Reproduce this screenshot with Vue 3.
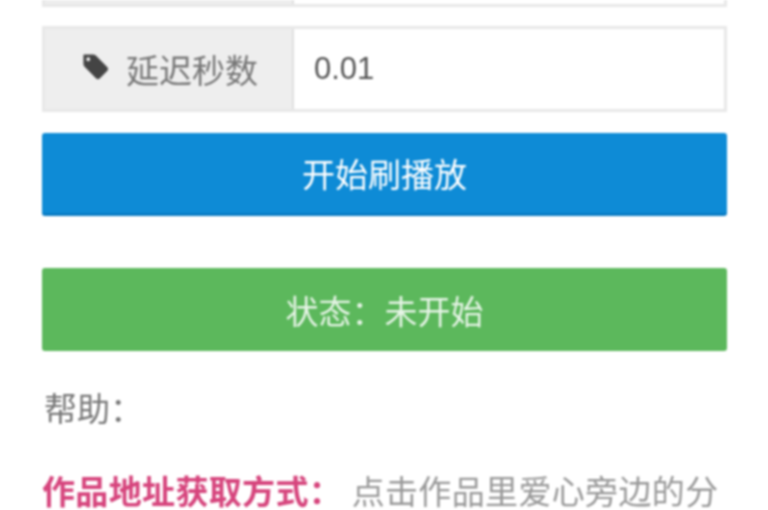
<script setup>
const delay = "0.01"
</script>

<template>
    <div class="page">
        <div class="input_group first_group">
            <div class="addon"></div>
            <div class="value"></div>
        </div>
        <div class="input_group">
            <div class="addon">
                <svg class="tag_icon" viewBox="0 0 30 30">
                    <path d="M3 2.500h9.500q1.600 0 2.800 1.200l12 12q1.700 1.800 0 3.600l-8 8q-1.800 1.700-3.600 0l-12-12q-1.200-1.200-1.200-2.800V3q0-.5.5-.5zM7.500 5.500a2 2 0 1 0 0 4 2 2 0 0 0 0-4z" fill-rule="evenodd" />
                </svg>
                <span>延迟秒数</span>
            </div>
            <div class="value">{{ delay }}</div>
        </div>
        <div class="btn btn_start">开始刷播放</div>
        <div class="btn btn_status">状态：未开始</div>
        <p class="help_title">帮助：</p>
        <p class="help_text"><span class="pink">作品地址获取方式：</span> 点击作品里爱心旁边的分</p>
    </div>
</template>

<style scoped>
.page {
    width: 768px;
    height: 510px;
    overflow: hidden;
    box-sizing: border-box;
    padding: 0 41px 0 42px;
    background-color: #fff;
    color: #777;
    font-family: "Liberation Sans", "Noto Sans CJK SC", sans-serif;
    font-size: 33px;
    filter: blur(1px);
}
.input_group {
    display: flex;
    height: 86px;
    box-sizing: border-box;
    border: 3px solid #e8e8e8;
    margin-bottom: 21px;
}
.first_group {
    height: 7px;
    border-top: 0;
    margin-bottom: 19px;
}
.addon {
    width: 249px;
    box-sizing: border-box;
    border-right: 2px solid #e0e0e0;
    background-color: #eee;
    display: flex;
    align-items: center;
    justify-content: center;
    gap: 16px;
    padding-left: 2px;
}
.tag_icon {
    width: 29px;
    height: 29px;
    fill: #444;
    margin-top: -5px;
}
.value {
    flex: 1;
    display: flex;
    align-items: center;
    padding-left: 20px;
    color: #555;
    font-size: 31px;
}
.btn {
    height: 83px;
    border-radius: 3px;
    display: flex;
    align-items: center;
    justify-content: center;
    color: #fff;
}
.btn_start {
    background-color: #0e8bd6;
    border-bottom: 3px solid #0a7cc4;
    box-sizing: border-box;
}
.btn_status {
    margin-top: 52px;
    background-color: #5cb85c;
    color: #e6f4e6;
}
.help_title {
    margin: 39px 0 0 2px;
    line-height: 40px;
    color: #777;
}
.help_text {
    margin: 43px 0 0 0;
    line-height: 40px;
    white-space: nowrap;
    color: #999;
    letter-spacing: 0.35px;
}
.pink {
    color: #d6457d;
    font-weight: bold;
}
</style>
